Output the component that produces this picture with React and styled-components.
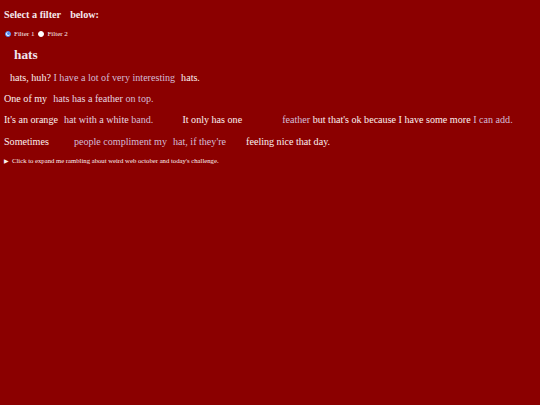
import React from "react";
import styled, { createGlobalStyle } from "styled-components";

const Global = createGlobalStyle`
  html, body { margin: 0; padding: 0; background: #8b0000; }
  body { font-family: "Liberation Serif", "Times New Roman", serif; color: #fbf0f0; }
`;

const Page = styled.div`
  padding: 4px 4px;
  font-size: 10.1px;
  line-height: 1.15;
`;

const Title = styled.h3`
  margin: 5px 0 0;
  font-size: 10.2px;
  font-weight: bold;
  color: #f5e8ec;
`;

const Gap = styled.span`
  display: inline-block;
  width: ${(p) => p.w}px;
`;

const Filters = styled.div`
  display: flex;
  align-items: center;
  margin-top: 9px;
  font-size: 7px;
  gap: 3px;
`;

const Radio = styled.span`
  display: inline-block;
  width: 6px;
  height: 6px;
  border-radius: 50%;
  box-sizing: border-box;
  background: #ffffff;
  border: ${(p) => (p.checked ? "1.5px solid #4a86f0" : "1px solid #fff")};
  margin-left: ${(p) => p.ml || 0}px;
  position: relative;
  &::after {
    content: "";
    display: ${(p) => (p.checked ? "block" : "none")};
    position: absolute;
    inset: 0.5px;
    border-radius: 50%;
    background: #4a86f0;
  }
`;

const Heading = styled.h2`
  margin: 9px 0 0 10px;
  font-size: 13.3px;
  font-weight: bold;
  color: #efe6f0;
`;

const P = styled.p`
  margin: ${(p) => p.mt || 10}px 0 0 ${(p) => p.ml || 0}px;
  white-space: nowrap;
`;

const T = styled.span`
  color: ${(p) => (p.tone === "soft" ? "#e8d8e2" : "#d4bcd6")};
`;

const Details = styled.div`
  margin-top: 10px;
  font-size: 6.7px;
  display: flex;
  align-items: center;
  gap: 3px;
`;

const Tri = styled.span`
  font-size: 5.5px;
`;

export default function App() {
  return (
    <>
      <Global />
      <Page>
        <Title>
          Select a filter<Gap w={9} />below:
        </Title>
        <Filters>
          <Radio checked ml={1} />
          <span>Filter 1</span>
          <Radio ml={1} />
          <span>Filter 2</span>
        </Filters>
        <Heading>hats</Heading>
        <P mt={10} ml={6}>
          hats, huh? <T>I have a lot of very interesting</T>
          <Gap w={6} />hats.
        </P>
        <P mt={9}>
          One of my<Gap w={6} /><T tone="soft">hats has a feather</T> <T>on top.</T>
        </P>
        <P mt={10}>
          It's an orange<Gap w={6} /><T tone="soft">hat with a white</T> <T>band.</T>
          <Gap w={29} />It only has one<Gap w={40} /><T>feather</T> but that's ok because I have some more <T>I can add.</T>
        </P>
        <P mt={10}>
          Sometimes<Gap w={25} /><T>people compliment my</T><Gap w={6} /><T>hat, if they're</T>
          <Gap w={20} />feeling nice that day.
        </P>
        <Details>
          <Tri>▶</Tri>
          <span>Click to expand me rambling about weird web october and today's challenge.</span>
        </Details>
      </Page>
    </>
  );
}
